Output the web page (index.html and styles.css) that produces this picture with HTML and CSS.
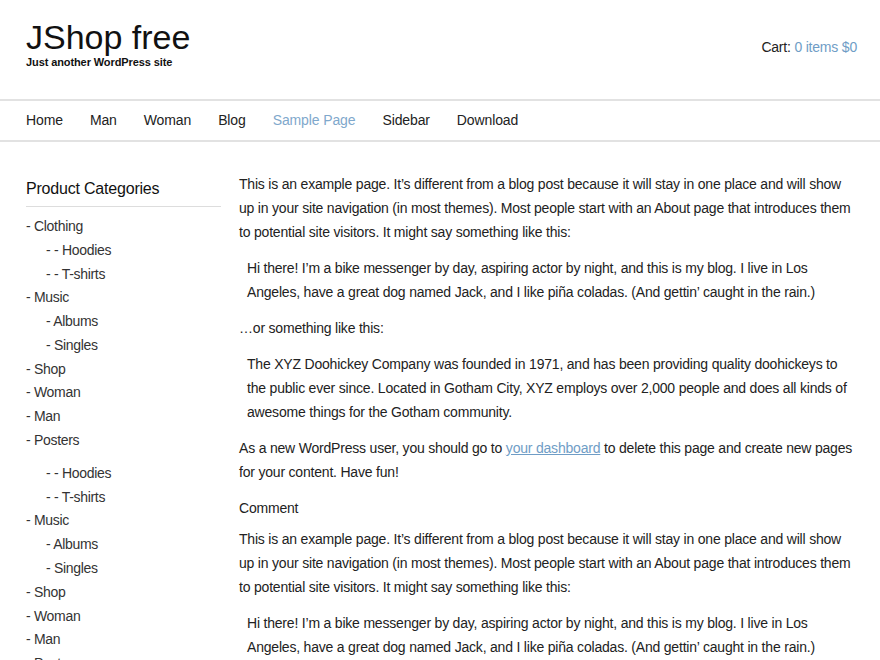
FILE: index.html
```html
<!DOCTYPE html>
<html>
<head>
<meta charset="utf-8">
<link rel="stylesheet" href="styles.css">
</head>
<body>
<header class="site-header">
  <div class="branding">
    <h1 class="site-title">JShop free</h1>
    <p class="site-desc">Just another WordPress site</p>
  </div>
  <div class="cart">Cart: <a href="#">0 items $0</a></div>
</header>
<nav class="main-nav">
  <ul>
    <li><a href="#">Home</a></li>
    <li><a href="#">Man</a></li>
    <li><a href="#">Woman</a></li>
    <li><a href="#">Blog</a></li>
    <li><a href="#" class="current">Sample Page</a></li>
    <li><a href="#">Sidebar</a></li>
    <li><a href="#">Download</a></li>
  </ul>
</nav>
<div class="content-wrap">
  <aside class="sidebar">
    <h2 class="widget-title">Product Categories</h2>
    <ul class="cats">
      <li>- Clothing</li>
      <li class="sub">- - Hoodies</li>
      <li class="sub">- - T-shirts</li>
      <li>- Music</li>
      <li class="sub">- Albums</li>
      <li class="sub">- Singles</li>
      <li>- Shop</li>
      <li>- Woman</li>
      <li>- Man</li>
      <li class="gap-after">- Posters</li>
      <li class="sub">- - Hoodies</li>
      <li class="sub">- - T-shirts</li>
      <li>- Music</li>
      <li class="sub">- Albums</li>
      <li class="sub">- Singles</li>
      <li>- Shop</li>
      <li>- Woman</li>
      <li>- Man</li>
      <li>- Posters</li>
    </ul>
  </aside>
  <main class="main">
    <p>This is an example page. It’s different from a blog post because it will stay in one place and will show up in your site navigation (in most themes). Most people start with an About page that introduces them to potential site visitors. It might say something like this:</p>
    <blockquote>Hi there! I’m a bike messenger by day, aspiring actor by night, and this is my blog. I live in Los Angeles, have a great dog named Jack, and I like piña coladas. (And gettin’ caught in the rain.)</blockquote>
    <p>…or something like this:</p>
    <blockquote>The XYZ Doohickey Company was founded in 1971, and has been providing quality doohickeys to the public ever since. Located in Gotham City, XYZ employs over 2,000 people and does all kinds of awesome things for the Gotham community.</blockquote>
    <p>As a new WordPress user, you should go to <a href="#">your dashboard</a> to delete this page and create new pages for your content. Have fun!</p>
    <h3 class="comment">Comment</h3>
    <p>This is an example page. It’s different from a blog post because it will stay in one place and will show up in your site navigation (in most themes). Most people start with an About page that introduces them to potential site visitors. It might say something like this:</p>
    <blockquote>Hi there! I’m a bike messenger by day, aspiring actor by night, and this is my blog. I live in Los Angeles, have a great dog named Jack, and I like piña coladas. (And gettin’ caught in the rain.)</blockquote>
  </main>
</div>
</body>
</html>
```

FILE: styles.css
```css
html, body {
  margin: 0;
  padding: 0;
  background: #fff;
}
body {
  font-family: "Liberation Sans", Arial, sans-serif;
  color: #222;
  font-size: 14px;
  line-height: 24px;
}
a {
  color: #6f9dc6;
  text-decoration: none;
}
.site-header {
  display: flex;
  justify-content: space-between;
  align-items: flex-start;
  padding: 18px 23px 0 26px;
  height: 81px;
}
.site-title {
  margin: 0;
  font-size: 34px;
  font-weight: normal;
  line-height: 38px;
  color: #111;
}
.site-desc {
  margin: 0;
  font-size: 11px;
  font-weight: bold;
  line-height: 12px;
  color: #111;
  letter-spacing: -0.1px;
}
.cart {
  margin-top: 17px;
  font-size: 14px;
  line-height: 24px;
  letter-spacing: -0.2px;
}
.main-nav {
  border-top: 2px solid #e2e2e2;
  border-bottom: 2px solid #e2e2e2;
}
.main-nav ul {
  list-style: none;
  margin: 0;
  padding: 0 0 0 26px;
  display: flex;
  gap: 27px;
}
.main-nav a {
  display: block;
  color: #222;
  font-size: 14px;
  line-height: 39px;
  letter-spacing: -0.12px;
}
.main-nav a.current {
  color: #7fa8cc;
}
.content-wrap {
  display: flex;
  padding: 30px 23px 0 26px;
  gap: 18px;
}
.sidebar {
  width: 195px;
  flex: none;
}
.widget-title {
  margin: 0;
  font-size: 16px;
  font-weight: normal;
  line-height: 34px;
  color: #111;
  border-bottom: 1px solid #ddd;
  letter-spacing: -0.2px;
}
.cats {
  list-style: none;
  margin: 8px 0 0;
  padding: 0;
}
.cats li {
  line-height: 23.78px;
  color: #333;
  letter-spacing: -0.3px;
}
.cats li.sub {
  padding-left: 20px;
}
.cats li.gap-after {
  margin-bottom: 9px;
}
.main {
  flex: 1;
  min-width: 0;
  letter-spacing: -0.2px;
}
.main p {
  margin: 0 0 12px;
}
.main blockquote {
  margin: 0 0 12px;
  padding-left: 8px;
}
.main a {
  text-decoration: underline;
}
.comment {
  margin: 0 0 7px;
  font-size: 14px;
  font-weight: normal;
  line-height: 24px;
}
```
